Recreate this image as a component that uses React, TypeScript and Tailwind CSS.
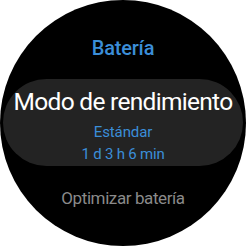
import React from "react";

const App: React.FC = () => {
  return (
    <div className="w-[246px] h-[246px] bg-white" style={{ fontFamily: "Roboto, sans-serif" }}>
      <div className="w-[246px] h-[246px] rounded-full bg-black flex flex-col items-center overflow-hidden">
        <div className="mt-[36px] h-[24px] leading-[24px] text-[20px] font-medium text-[#3b8ed8] tracking-[-0.2px]">
          Batería
        </div>
        <div className="mt-[19px] w-[240px] h-[87px] rounded-full bg-[#232323] flex flex-col items-center">
          <div className="mt-[8px] h-[30px] leading-[30px] text-[24.5px] text-white tracking-[-0.7px]">
            Modo de rendimiento
          </div>
          <div className="mt-[5px] h-[20px] leading-[20px] text-[15px] text-[#3b8ed8] tracking-[-0.1px]">
            Estándar
          </div>
          <div className="mt-[2px] h-[20px] leading-[20px] text-[15px] text-[#3b8ed8] tracking-[-0.2px]">
            1 d 3 h 6 min
          </div>
        </div>
        <div className="mt-[21px] h-[22px] leading-[22px] text-[17px] text-[#8a8a8a] tracking-[-0.4px]">
          Optimizar batería
        </div>
      </div>
    </div>
  );
};

export default App;
